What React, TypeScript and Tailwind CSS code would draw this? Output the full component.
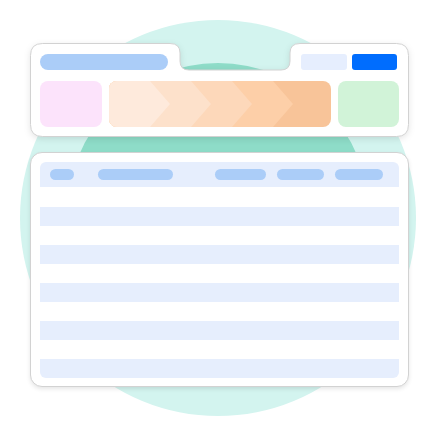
import React from "react";

const Chevrons = () => {
  const bounds = [41, 82, 123, 164];
  const colors = ["#feeadc", "#fde1cb", "#fdd8ba", "#fdcfa8"];
  return (
    <svg width="222" height="46" viewBox="0 0 222 46" className="block">
      <rect x="0" y="0" width="222" height="46" fill="#f8c499" />
      {[3, 2, 1, 0].map((i) => (
        <polygon
          key={i}
          points={`0,0 ${bounds[i]},0 ${bounds[i] + 20},23 ${bounds[i]},46 0,46`}
          fill={colors[i]}
        />
      ))}
    </svg>
  );
};

export default function App() {
  return (
    <div className="relative w-[436px] h-[435px] overflow-hidden bg-white">
      <div className="absolute left-[20px] top-[20px] w-[396px] h-[396px] rounded-full bg-[#d3f4ef]" />
      <div className="absolute left-[67px] top-[63px] w-[302px] h-[302px] rounded-full bg-[#8edcc8]" />

      <div className="relative flex flex-col gap-[15px] pl-[30px] pt-[43px] w-[409px]">
        {/* top card */}
        <div className="relative w-[379px] h-[94px]">
          <svg
            width="379"
            height="94"
            viewBox="0 0 379 94"
            className="absolute inset-0 overflow-visible drop-shadow-[0_2px_3px_rgba(0,0,0,0.10)]"
          >
            <path
              d="M 12.5 0.5 H 140 Q 150 0.5 150 10 V 18 Q 150 27 159 27 H 251 Q 260 27 260 18 V 10 Q 260 0.5 270 0.5 H 366.5 Q 378.5 0.5 378.5 12.5 V 81.5 Q 378.5 93.5 366.5 93.5 H 12.5 Q 0.5 93.5 0.5 81.5 V 12.5 Q 0.5 0.5 12.5 0.5 Z"
              fill="#ffffff"
              stroke="#d2d2d2"
              strokeWidth="1"
            />
          </svg>
          <div className="relative flex flex-col px-[10px] pt-[11px]">
            <div className="flex items-center justify-between h-[16px] pr-[2px]">
              <div className="w-[128px] h-[16px] rounded-full bg-[#abcdf8]" />
              <div className="flex gap-[5px]">
                <div className="w-[46px] h-[16px] rounded-[3px] bg-[#e6eefe]" />
                <div className="w-[45px] h-[16px] rounded-[3px] bg-[#006dfe]" />
              </div>
            </div>
            <div className="flex gap-[7px] mt-[11px] h-[46px]">
              <div className="w-[62px] h-[46px] rounded-[8px] bg-[#fce3fb]" />
              <div className="w-[222px] h-[46px] rounded-[8px] overflow-hidden">
                <Chevrons />
              </div>
              <div className="w-[61px] h-[46px] rounded-[8px] bg-[#d1f3d8]" />
            </div>
          </div>
        </div>

        {/* table card */}
        <div className="w-[379px] h-[235px] rounded-[12px] bg-white border border-[#d2d2d2] shadow-[0_2px_4px_rgba(0,0,0,0.10)] px-[9px] pt-[9px]">
          <div className="flex items-center h-[25px] rounded-t-[6px] bg-[#e6eefd] pl-[10px]">
            <div className="w-[24px] h-[11px] rounded-full bg-[#abcdf8]" />
            <div className="w-[75px] h-[11px] rounded-full bg-[#abcdf8] ml-[24px]" />
            <div className="w-[51px] h-[11px] rounded-full bg-[#abcdf8] ml-[42px]" />
            <div className="w-[47px] h-[11px] rounded-full bg-[#abcdf8] ml-[11px]" />
            <div className="w-[48px] h-[11px] rounded-full bg-[#abcdf8] ml-[11px]" />
          </div>
          <div className="h-[20px]" />
          <div className="h-[19px] bg-[#e6eefd]" />
          <div className="h-[19px]" />
          <div className="h-[19px] bg-[#e6eefd]" />
          <div className="h-[19px]" />
          <div className="h-[19px] bg-[#e6eefd]" />
          <div className="h-[19px]" />
          <div className="h-[19px] bg-[#e6eefd]" />
          <div className="h-[19px]" />
          <div className="h-[19px] rounded-b-[6px] bg-[#e6eefd]" />
        </div>
      </div>
    </div>
  );
}
